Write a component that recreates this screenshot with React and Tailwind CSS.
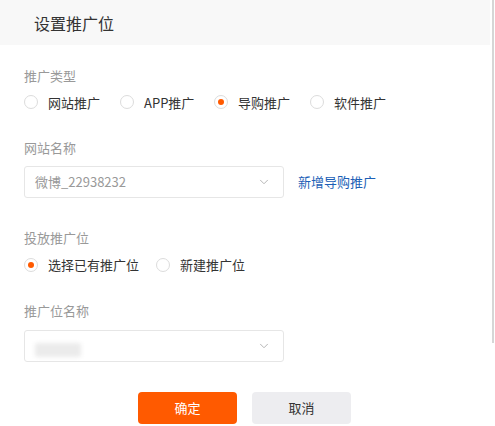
import { ChevronDown } from 'lucide-react';

const font = { fontFamily: '"Noto Sans CJK SC", "Noto Sans", sans-serif' };

const Radio = ({ label, checked }) => (
  <label className="flex items-center gap-[10px] text-[13px] text-[#333]">
    <span className="flex h-[14px] w-[14px] items-center justify-center rounded-full border border-[#dcdcdc] bg-white">
      {checked ? <span className="h-[6px] w-[6px] rounded-full bg-[#ff5a00]" /> : null}
    </span>
    {label}
  </label>
);

const Select = ({ children }) => (
  <div className="flex h-[32px] w-[260px] items-center justify-between rounded-[3px] border border-[#e6e6e6] bg-white pl-[10px] pr-[12px]">
    <div className="text-[13px] text-[#999]">{children}</div>
    <ChevronDown className="h-[14px] w-[14px] text-[#aaa]" strokeWidth={1.5} />
  </div>
);

const App = () => {
  return (
    <div className="relative h-[426px] w-[495px] overflow-hidden bg-white" style={font}>
      <div className="flex h-[45px] w-[490px] items-center bg-[#f8f8f8] pl-[34px] text-[16px] text-[#333]">
        设置推广位
      </div>

      <div className="px-[24px]">
        <div className="mt-[21px] text-[13px] text-[#999]">推广类型</div>
        <div className="mt-[7px] flex items-center">
          <div className="w-[96px]"><Radio label="网站推广" /></div>
          <div className="w-[94px]"><Radio label="APP推广" /></div>
          <div className="w-[96px]"><Radio label="导购推广" checked /></div>
          <div><Radio label="软件推广" /></div>
        </div>

        <div className="mt-[26px] text-[13px] text-[#999]">网站名称</div>
        <div className="mt-[8px] flex items-center gap-[14px]">
          <Select>微博_22938232</Select>
          <span className="text-[13px] text-[#1d5fb6]">新增导购推广</span>
        </div>

        <div className="mt-[30px] text-[13px] text-[#999]">投放推广位</div>
        <div className="mt-[8px] flex items-center">
          <div className="w-[132px]"><Radio label="选择已有推广位" checked /></div>
          <div><Radio label="新建推广位" /></div>
        </div>

        <div className="mt-[26px] text-[13px] text-[#999]">推广位名称</div>
        <div className="mt-[10px]">
          <Select>
            <div className="mt-[8px] h-[14px] w-[46px] rounded-[2px] bg-[#ebebeb] blur-[2px]" />
          </Select>
        </div>

        <div className="mt-[30px] flex justify-center gap-[15px] pr-[6px]">
          <button type="button" className="h-[32px] w-[99px] rounded-[4px] bg-[#ff5a00] text-[13px] text-white">
            确定
          </button>
          <button type="button" className="h-[32px] w-[99px] rounded-[4px] bg-[#ededf0] text-[13px] text-[#333]">
            取消
          </button>
        </div>
      </div>

      <div className="absolute right-[1px] top-0 h-[343px] w-[2px] bg-[#d6d6d6]" />
    </div>
  );
};

export default App;
